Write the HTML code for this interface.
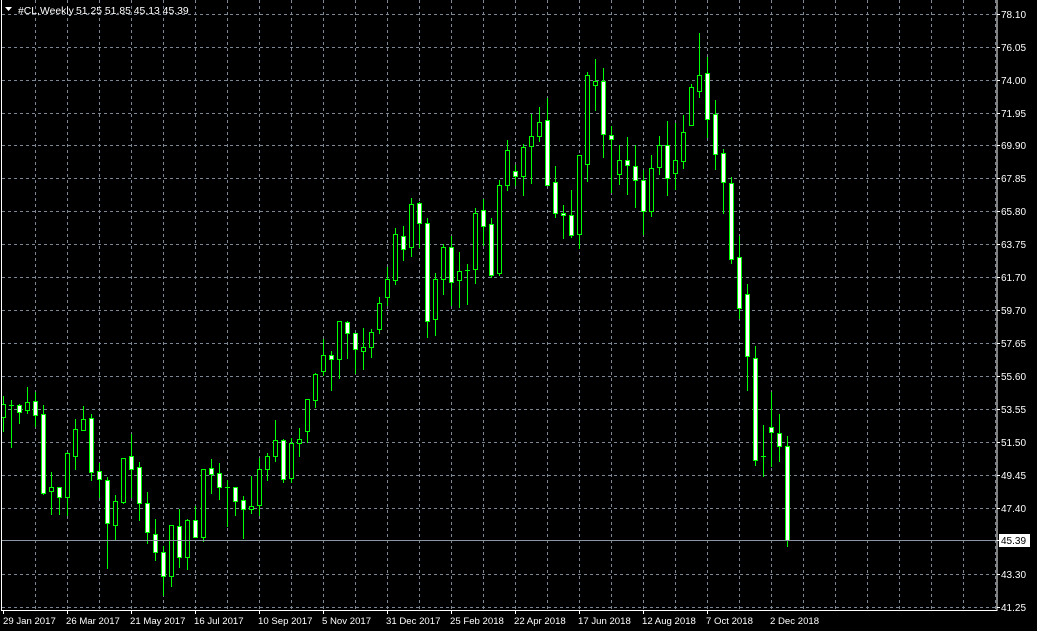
<!DOCTYPE html>
<html><head><meta charset="utf-8">
<style>
html,body{margin:0;padding:0;background:#000;width:1037px;height:631px;overflow:hidden}
svg{display:block}
text{font-family:"Liberation Sans",sans-serif;font-size:10px;fill:#fff}
.d text{font-size:9.6px}
</style></head><body>
<svg id="s" width="1037" height="631" xmlns="http://www.w3.org/2000/svg">
<rect width="1037" height="631" fill="#000"/>
<g id="grid" stroke="#7b8794" stroke-width="1" stroke-dasharray="3,3" shape-rendering="crispEdges"></g>
<g id="candles" shape-rendering="crispEdges"></g>
<line x1="2" y1="540.5" x2="997" y2="540.5" stroke="#8a96a2" stroke-width="1" shape-rendering="crispEdges"/>
<rect x="1.5" y="-1" width="995.5" height="611.5" fill="none" stroke="#fff" stroke-width="1" shape-rendering="crispEdges"/>
<g id="ticks" stroke="#fff" stroke-width="1" shape-rendering="crispEdges"></g>
<polygon points="5,7 12,7 8.5,11" fill="#fff"/>
<text x="18" y="14" style="font-size:10.4px">#CL,Weekly</text>
<text x="76" y="14" style="font-size:10.4px">51.25 51.85 45.13 45.39</text>
<g>
<text x="1001" y="18">78.10</text>
<text x="1001" y="51">76.05</text>
<text x="1001" y="84">74.00</text>
<text x="1001" y="117">71.95</text>
<text x="1001" y="149">69.90</text>
<text x="1001" y="182">67.85</text>
<text x="1001" y="215">65.80</text>
<text x="1001" y="248">63.75</text>
<text x="1001" y="281">61.70</text>
<text x="1001" y="314">59.70</text>
<text x="1001" y="347">57.65</text>
<text x="1001" y="380">55.60</text>
<text x="1001" y="413">53.55</text>
<text x="1001" y="446">51.50</text>
<text x="1001" y="479">49.45</text>
<text x="1001" y="512">47.40</text>
<rect x="999" y="534" width="31" height="13" fill="#fff"/>
<text x="1001" y="544" style="fill:#000">45.39</text>
<text x="1001" y="578">43.30</text>
<text x="1001" y="611">41.25</text>
</g>
<g class="d">
<text x="3" y="624">29 Jan 2017</text>
<text x="66" y="624">26 Mar 2017</text>
<text x="130" y="624">21 May 2017</text>
<text x="194" y="624">16 Jul 2017</text>
<text x="258" y="624">10 Sep 2017</text>
<text x="322" y="624">5 Nov 2017</text>
<text x="386" y="624">31 Dec 2017</text>
<text x="450" y="624">25 Feb 2018</text>
<text x="514" y="624">22 Apr 2018</text>
<text x="578" y="624">17 Jun 2018</text>
<text x="642" y="624">12 Aug 2018</text>
<text x="706" y="624">7 Oct 2018</text>
<text x="770" y="624">2 Dec 2018</text>
</g>
</svg>
<script>
var NS="http://www.w3.org/2000/svg";
function el(p,t,a){var e=document.createElementNS(NS,t);for(var k in a)e.setAttribute(k,a[k]);p.appendChild(e);return e;}
var g=document.getElementById('grid');
for(var x=35;x<=995;x+=32)el(g,'line',{x1:x+.5,y1:0,x2:x+.5,y2:610});
var ys=[14,47,80,113,145,178,211,244,277,310,343,376,409,442,475,508,574,607];
ys.forEach(function(y){el(g,'line',{x1:2,y1:y+.5,x2:997,y2:y+.5});});
var tk=document.getElementById('ticks');
ys.concat([540]).forEach(function(y){el(tk,'line',{x1:997,y1:y+.5,x2:1000,y2:y+.5});});
for(var x=3;x<=770;x+=64)el(tk,'line',{x1:x+.5,y1:610,x2:x+.5,y2:614});
var D=[
['o',404,416.7,396,430.7],['w',404.7,404.7,400,446.7],['w',405.3,412.3,404,423.3],['o',402.3,410.3,386.7,412.7],['w',401.3,415.3,392,425.7],
['w',414,492.7,405,493.7],['o',487.3,491.3,472,513.7],['w',487.3,496.7,487.3,513.7],['o',453.3,497.3,452,514.7],['o',429.3,455.7,419,468.7],
['o',419.3,429.7,406,429.7],['w',418.3,472.3,414,479.7],['w',471.3,479.3,463,496.7],['w',480.3,523.3,477,567.7],['o',501.3,525.3,495,538.7],
['o',458.3,501.7,458.3,502.7],['w',456.3,469.3,434,496.7],['w',467.3,503.3,462,519.7],['w',503.3,532.3,492,543.3],['w',534.3,552.3,519,559.7],
['w',552.3,576.3,546,594.7],['o',525.3,576.3,525.3,585.7],['w',526.3,557.3,508.7,566.7],['o',520.3,557.3,519,568.7],['w',520.3,537.3,506,537.3],
['o',469.3,537.3,469.3,541],['w',468.3,474.3,459,492.7],['w',473.3,486.7,463,498.7],['d',486.7,486.7,480,525.7],['w',487.3,501.3,487.3,514.7],
['w',500.3,509.3,496,537.7],['o',506.3,509.3,476,512.7],['o',469.3,505.3,458,514.7],
['o',456.3,468.7,453.3,480],['o',440.3,455.7,420,460.7],['w',440.3,479.3,439.3,481.7],['o',443.3,478.3,438.3,481.7],['o',439.3,443.3,428,455.7],
['o',399.3,431.3,399.3,441.7],['o',374.3,399.7,372.7,407],['o',355.3,370.7,339,375.3],['w',355.3,359.3,351.3,390],['o',321.3,358.7,321.3,377.7],
['w',322.3,333.3,321.3,357.7],['w',333.3,348.7,333.3,373],['o',347.3,350.7,328,368.7],['o',332.3,347.3,329.3,356.7],['o',303.3,329.3,297,332.7],
['o',279.3,296.7,267.3,304.7],['o',234.3,279.7,228.3,283.7],['w',236.3,248.7,226.3,259.7],['o',204.3,247.3,198.3,255.7],['w',203.3,223.3,202.3,246.7],
['w',223.3,321.3,218.3,336.7],['o',279.3,319.3,273.3,334.7],['o',247.3,279.3,244.3,293.7],['w',247.3,282.3,236.3,304.7],['o',271.3,280.3,252,306.7],
['d',270,270,264.3,303.7],['o',213.3,269.3,208.3,283.3],['w',210.3,226.3,199.3,244.7],['w',224.3,274.7,218.3,277],['o',185,273,180,275],
['o',150,185,140,190],['w',171,176,165,185],
['o',147.3,175.7,144,194.7],['o',136.3,146.3,114,182.7],['o',122.3,135.7,107,140.7],['w',120.3,185.3,98.3,185.3],['w',182.3,213.3,166,216.7],
['w',213.3,215.3,205,237.7],['w',215.3,235.3,190,236.7],['o',155.3,234.3,155.3,248.3],['o',75.3,164.3,72,180.7],['o',81.3,85.3,59,110],
['w',81.3,134.3,68,156.7],['w',135.3,139.3,126.3,191.7],['o',160.3,174.3,145.3,183.7],['w',160.3,165.3,137,193.7],['w',166.3,180.3,145.3,206.7],
['w',180.3,210.7,170,233.7],['o',168.3,211.3,155.3,215.7],['o',145.3,167.3,136.3,173.7],['w',145.3,178,121,194.7],['o',160.3,173.3,122.7,188.7],
['o',132.3,161.3,115,167.7],['o',87.3,125.3,84.3,125.3],['o',75.3,91.3,33,96.7],['w',73.3,119.3,57.3,136.7],['w',114.3,154.3,100.3,168.7],
['w',153.3,182.3,149.3,212.7],['w',183.3,259.3,177.3,262.7],['w',257.3,308.3,236.3,317.7],
['w',294.3,356.3,284,389.7],['w',358.3,460.3,346,464.7],['d',456.3,456.3,425,475.7],['w',427.3,432.3,392.3,466.3],['w',433.3,446.3,414,461],['w',446.3,540,436,545.7]
];
var c=document.getElementById('candles');
D.forEach(function(d,i){
 var cx=3+8*i;
 var t=Math.round(d[1]),b=Math.round(d[2]),h=Math.round(d[3]),l=Math.round(d[4]);
 el(c,'line',{x1:cx+.5,y1:h,x2:cx+.5,y2:l+1,stroke:'#00ff00','stroke-width':1});
 if(d[0]=='d'||b-t<2){
  el(c,'rect',{x:cx-2,y:t,width:5,height:Math.max(1,b-t+1),fill:'#00ff00'});
 }else{
  el(c,'rect',{x:cx-1.5,y:t+.5,width:4,height:b-t,fill:d[0]=='w'?'#fff':'#000',stroke:'#00ff00','stroke-width':1});
 }
});
</script>
</body></html>
